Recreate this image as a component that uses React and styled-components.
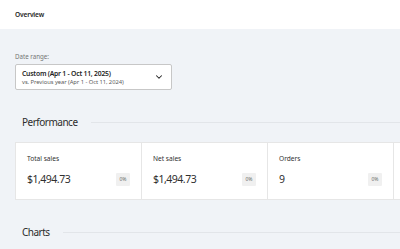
import React from "react";
import styled, { createGlobalStyle } from "styled-components";

const Global = createGlobalStyle`
  html, body { margin: 0; padding: 0; background: #f0f3f7; }
  body { font-family: "Noto Sans", "Open Sans", sans-serif; color: #1e1e1e; overflow: hidden; }
`;

const Page = styled.div`
  width: 400px;
  height: 249px;
  overflow: hidden;
  background: #f0f3f7;
`;

const Header = styled.header`
  height: 29px;
  background: #fff;
  display: flex;
  align-items: center;
  padding-left: 15px;
  font-size: 6.6px;
  letter-spacing: -0.15px;
  font-weight: 600;
  color: #1e1e1e;
`;

const Main = styled.main`
  padding: 23px 0 0 15px;
`;

const Label = styled.div`
  font-size: 6.2px;
  line-height: 9px;
  color: #757575;
  margin-bottom: 3px;
`;

const Select = styled.div`
  box-sizing: border-box;
  width: 157px;
  height: 26px;
  background: #fff;
  border: 1px solid #c7c7c7;
  border-radius: 2px;
  display: flex;
  align-items: center;
  justify-content: space-between;
  padding: 0 7px 0 6px;
`;

const SelectText = styled.div`
  display: flex;
  flex-direction: column;
`;

const Primary = styled.span`
  font-size: 6.8px;
  letter-spacing: -0.22px;
  line-height: 9px;
  font-weight: 600;
  color: #1e1e1e;
`;

const Secondary = styled.span`
  font-size: 5.8px;
  letter-spacing: -0.05px;
  line-height: 8px;
  color: #5a5a5a;
`;

const SectionHead = styled.div`
  display: flex;
  align-items: center;
  gap: 13px;
  padding-left: 7px;
  margin-top: ${(p) => p.$top}px;
  height: 16px;
`;

const SectionTitle = styled.h2`
  margin: 0;
  font-size: 10px;
  letter-spacing: -0.5px;
  font-weight: 400;
  color: #2c2c2c;
  white-space: nowrap;
`;

const Rule = styled.div`
  flex: 1;
  height: 1px;
  background: #e2e5e9;
`;

const Cards = styled.div`
  display: flex;
  margin-top: 12px;
  background: #fff;
  border: 1px solid #e6e6e6;
  border-right: none;
  width: 520px;
  box-sizing: border-box;
  height: 58px;
`;

const Card = styled.div`
  box-sizing: border-box;
  width: 126px;
  flex: none;
  border-right: 1px solid #e6e6e6;
  padding: 11px 11px 0 11px;
  display: flex;
  flex-direction: column;
`;

const CardLabel = styled.div`
  font-size: 6.6px;
  line-height: 9px;
  color: #2f2f2f;
`;

const CardRow = styled.div`
  margin-top: 8px;
  display: flex;
  align-items: center;
  justify-content: space-between;
`;

const Value = styled.div`
  font-size: 10.5px;
  letter-spacing: -0.5px;
  line-height: 16px;
  color: #2f2f2f;
`;

const Badge = styled.span`
  background: #f0f0f0;
  color: #6a6a6a;
  font-size: 5px;
  width: 14px;
  height: 13px;
  display: flex;
  align-items: center;
  justify-content: center;
  border-radius: 1px;
`;

const Chevron = () => (
  <svg width="10" height="10" viewBox="0 0 24 24" fill="none" stroke="#1e1e1e" strokeWidth="2.5" strokeLinecap="round" strokeLinejoin="round">
    <path d="M6 9l6 6 6-6" />
  </svg>
);

const metrics = [
  { label: "Total sales", value: "$1,494.73" },
  { label: "Net sales", value: "$1,494.73" },
  { label: "Orders", value: "9" },
];

export default function App() {
  return (
    <Page>
      <Global />
      <Header>Overview</Header>
      <Main>
        <Label>Date range:</Label>
        <Select>
          <SelectText>
            <Primary>Custom (Apr 1 - Oct 11, 2025)</Primary>
            <Secondary>vs. Previous year (Apr 1 - Oct 11, 2024)</Secondary>
          </SelectText>
          <Chevron />
        </Select>
        <SectionHead $top={24}>
          <SectionTitle>Performance</SectionTitle>
          <Rule />
        </SectionHead>
        <Cards>
          {metrics.map((m) => (
            <Card key={m.label}>
              <CardLabel>{m.label}</CardLabel>
              <CardRow>
                <Value>{m.value}</Value>
                <Badge>0%</Badge>
              </CardRow>
            </Card>
          ))}
        </Cards>
        <SectionHead $top={24}>
          <SectionTitle>Charts</SectionTitle>
          <Rule />
        </SectionHead>
      </Main>
    </Page>
  );
}
